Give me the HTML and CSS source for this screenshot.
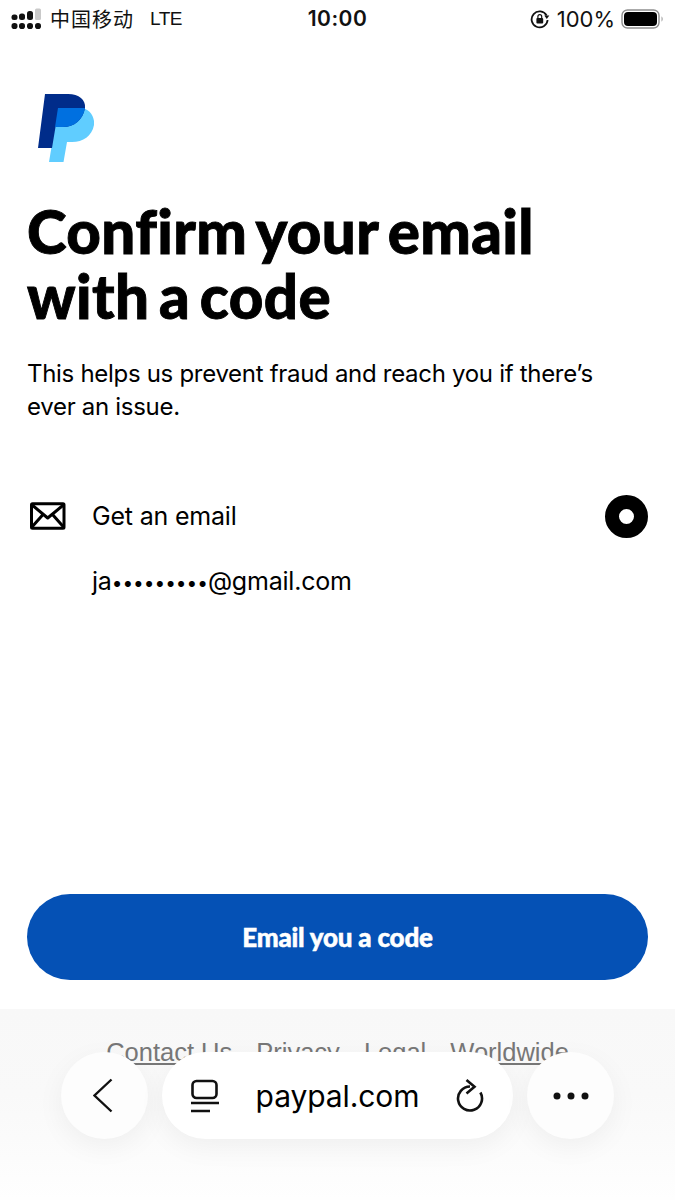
FILE: index.html
```html
<!DOCTYPE html>
<html lang="en">
<head>
<meta charset="utf-8">
<title>Confirm your email</title>
<link rel="stylesheet" href="styles.css">
</head>
<body>
<div class="page">
  <header class="status">
    <div class="status-left">
      <svg class="signal" width="30" height="24" viewBox="0 0 30 24">
        <g fill="#111">
          <rect x=".5" y="9.500" width="6" height="5.500" rx="2.500"/><rect x="8" y="8.500" width="6" height="6.500" rx="2.500"/><rect x="16" y="6" width="6" height="9" rx="2.500"/>
          <rect x=".5" y="18" width="6" height="6" rx="2.800"/><rect x="8" y="18" width="6" height="6" rx="2.800"/><rect x="16" y="18" width="6" height="6" rx="2.800"/><rect x="24" y="18" width="6" height="6" rx="2.800"/>
        </g>
        <rect x="24" y="3.500" width="6" height="11.500" rx="1.500" fill="#c9c9c9"/>
      </svg>
      <span class="carrier">中国移动</span>
      <span class="lte">LTE</span>
    </div>
    <div class="clock">10:00</div>
    <div class="status-right">
      <svg width="20" height="20" viewBox="0 0 20 20" fill="none">
        <path d="M16.600 6.500A8 8 0 1 0 17.600 11" stroke="#111" stroke-width="1.800"/>
        <path d="M14.300 6.600h5l-2.500 3.400z" fill="#111"/>
        <rect x="6.400" y="9" width="6.800" height="5.400" rx="1" fill="#111"/>
        <path d="M7.900 9V7.600a1.900 1.900 0 0 1 3.800 0V9" stroke="#111" stroke-width="1.200"/>
      </svg>
      <span class="pct">100%</span>
      <svg width="44" height="20" viewBox="0 0 44 20" fill="none">
        <rect x="1" y="1" width="37" height="18" rx="5.500" stroke="#8e8e8e" stroke-width="1.400"/>
        <rect x="3" y="3" width="33" height="14" rx="4" fill="#000"/>
        <path d="M40.500 7.500c1.600.4 1.600 4.600 0 5z" fill="#a0a0a0"/>
      </svg>
    </div>
  </header>

  <main class="content">
    <svg class="logo" width="56" height="68" viewBox="38 94 56 68">
      <path d="M58 108H80C89 108 95 116 94 125C92 136 83 142 72 142H67L63.500 162H49Z" fill="#60cdff"/>
      <path d="M45 94H68C79 94 86 100 85 108C83 120 74 127 63 127H55.500L52 148H38Z" fill="#002c8a"/>
      <path d="M58 108H85C83 120 74 127 63 127H55Z" fill="#0070e0"/>
    </svg>
    <h1 class="title">Confirm your email<br>with a code</h1>
    <p class="lead">This helps us prevent fraud and reach you if there’s ever an issue.</p>

    <div class="option">
      <svg class="mail" width="36" height="28" viewBox="0 0 36 28" fill="none" stroke="#000" stroke-width="3" stroke-linejoin="round">
        <rect x="1.500" y="1.700" width="32.500" height="24.600" rx="1"/>
        <path d="M1.500 2.500 17.700 16 34 2.500M1.500 25.500 13 12.500M34 25.500 22.500 12.500"/>
      </svg>
      <span class="option-label">Get an email</span>
      <span class="radio"></span>
    </div>
    <div class="address">ja<span class="dots">•••••••••</span>@gmail.com</div>

    <button class="cta" type="button">Email you a code</button>
  </main>

  <footer class="foot">
    <a href="#">Contact Us</a><a href="#">Privacy</a><a href="#">Legal</a><a href="#">Worldwide</a>
  </footer>

  <nav class="toolbar">
    <div class="round">
      <svg width="24" height="36" viewBox="0 0 24 36" fill="none" stroke="#111" stroke-width="2.400"><path d="M18.500 1.500 1.500 17.500 18.500 33.500"/></svg>
    </div>
    <div class="pill">
      <svg width="30" height="34" viewBox="0 0 30 34" fill="none" stroke="#111" stroke-width="2.600">
        <rect x="2.500" y="2" width="24" height="17" rx="4"/>
        <path d="M1 24h28M1 32h19"/>
      </svg>
      <span class="url">paypal.com</span>
      <svg width="30" height="34" viewBox="0 0 30 34" fill="none" stroke="#111" stroke-width="2.600">
        <path d="M15 7.500A12 12 0 1 0 25.400 13.500"/>
        <path d="M11.500 1l8 6.800-8 6.700"/>
      </svg>
    </div>
    <div class="round">
      <svg width="36" height="8" viewBox="0 0 36 8" fill="#111"><circle cx="4" cy="4" r="3.500"/><circle cx="18" cy="4" r="3.500"/><circle cx="32" cy="4" r="3.500"/></svg>
    </div>
  </nav>
</div>
</body>
</html>
```
FILE: styles.css
```css
* { box-sizing: border-box; }
html, body { margin: 0; padding: 0; }
body { background: #fff; font-family: Inter, "Liberation Sans", sans-serif; color: #000; }
.page { position: relative; width: 675px; height: 1200px; overflow: hidden; display: flex; flex-direction: column; }

.status { display: flex; justify-content: space-between; align-items: center; height: 37px; padding: 0 11px; position: relative; color: #111; }
.status-left { display: flex; align-items: center; }
.signal { margin-right: 9px; margin-top: -3px; }
.carrier { font-family: "Noto Sans CJK SC", sans-serif; font-size: 20px; letter-spacing: 1px; margin-right: 16px; }
.lte { font-family: "Liberation Sans", sans-serif; font-size: 19px; letter-spacing: -.5px; }
.clock { position: absolute; left: 0; right: 0; text-align: center; font-size: 21px; font-weight: 600; letter-spacing: .5px; }
.status-right { display: flex; align-items: center; gap: 7px; margin-right: -1px; }
.pct { font-size: 22px; margin-right: -1px; }

.content { flex: 1; display: flex; flex-direction: column; padding: 0 27px; }
.logo { display: block; margin: 57px 0 0 11px; }
.title { margin: 37px 0 0; font-family: Lato, sans-serif; font-weight: 900; font-size: 60px; line-height: 65px; letter-spacing: .4px; word-spacing: -5px; -webkit-text-stroke: .9px #000; }
.lead { margin: 28px 0 0; max-width: 590px; font-size: 24px; line-height: 33px; letter-spacing: -.3px; }

.option { display: flex; align-items: center; margin-top: 71px; height: 44px; }
.mail { margin-left: 3px; flex: none; }
.option-label { margin-left: 26px; font-size: 25px; letter-spacing: -.2px; flex: 1; }
.radio { width: 43px; height: 43px; border-radius: 50%; border: 14px solid #000; background: #fff; flex: none; }
.address { margin: 26px 0 0 65px; font-size: 25px; line-height: 34px; letter-spacing: -.2px; }
.dots { font-size: 19px; letter-spacing: 0; }

.cta { margin-top: auto; margin-bottom: 29px; height: 86px; border: 0; border-radius: 43px; background: #0551b5; color: #fff; font-family: Lato, sans-serif; font-weight: 900; font-size: 26px; letter-spacing: -.2px; -webkit-text-stroke: .5px #fff; }

.foot { flex: none; height: 191px; background: linear-gradient(#f8f8f8, #f9f9f9 45%, #fefefe); display: flex; justify-content: center; gap: 24px; padding-top: 29px; font-family: "Liberation Sans", sans-serif; font-size: 25.5px; }
.foot a { color: #777; text-decoration: underline; text-underline-offset: 2px; height: 34px; }

.toolbar { position: absolute; left: 61px; top: 1052px; display: flex; gap: 14px; }
.round, .pill { height: 87px; background: #fdfdfd; display: flex; align-items: center; box-shadow: 0 8px 28px rgba(0,0,0,.05); }
.round { width: 87px; border-radius: 50%; justify-content: center; }
.pill { width: 351px; border-radius: 44px; justify-content: space-between; padding: 0 28px; background: #fff; }
.url { font-family: Inter, sans-serif; font-size: 30px; letter-spacing: -.1px; }
```
